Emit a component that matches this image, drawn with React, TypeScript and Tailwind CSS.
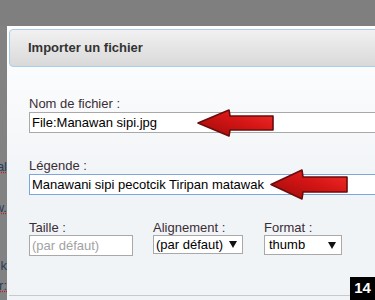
import React from 'react'

function Arrow({ className, w, h }: { className: string; w: number; h: number }) {
  // arrow pointing left; tip at x=1
  const hx = Math.round(w * 0.42)
  const t = Math.round(h * 0.24)
  const b = h - t
  const id = 'g' + w + h
  return (
    <svg
      className={className}
      width={w + 2}
      height={h + 2}
      viewBox={`0 0 ${w + 2} ${h + 2}`}
    >
      <defs>
        <linearGradient id={id} x1="0" y1="1" x2="1" y2="0">
          <stop offset="0" stopColor="#9c0a0a" />
          <stop offset="0.55" stopColor="#d41515" />
          <stop offset="1" stopColor="#f3302a" />
        </linearGradient>
      </defs>
      <path
        d={`M1 ${h / 2 + 1} L${hx} 1 L${hx + 1} ${t + 1} L${w + 1} ${t + 1} L${w + 1} ${b + 1} L${hx + 1} ${b + 1} L${hx} ${h + 1} Z`}
        fill={`url(#${id})`}
        stroke="#6a0c0c"
        strokeWidth="1.6"
        strokeLinejoin="round"
      />
    </svg>
  )
}

function Caret() {
  return (
    <svg width="8" height="7" viewBox="0 0 8 7">
      <path d="M0 0 H8 L4 7 Z" fill="#111" />
    </svg>
  )
}

export default function App() {
  return (
    <div
      className="relative w-[375px] h-[300px] overflow-hidden bg-[#7f7f7f] text-[13px] text-[#333]"
      style={{ fontFamily: '"Liberation Sans", Arial, sans-serif' }}
    >
      <div className="h-[26px]" />
      <div className="flex h-[274px]">
        {/* page behind the overlay */}
        <div className="w-[7px] shrink-0 overflow-hidden bg-[#828282] text-[#2a3d5c] leading-[15px]">
          <div className="flex flex-col items-end">
            <span className="mt-[133px] whitespace-nowrap underline decoration-dotted decoration-[#c21d1d]">
              sal
            </span>
            <span className="mt-[26px] whitespace-nowrap underline decoration-dotted decoration-[#c21d1d]">
              w.
            </span>
            <span className="mt-[43px] whitespace-nowrap">k</span>
            <span className="mt-[5px] whitespace-nowrap underline decoration-dotted decoration-[#c21d1d]">
              r:
            </span>
          </div>
        </div>

        {/* dialog */}
        <div className="w-[420px] shrink-0 bg-white pt-[3px] pl-[2px]">
          <div className="h-[38px] rounded-[4px] border border-[#aacde8] bg-gradient-to-b from-[#f1f1f1] to-[#d9d9d9] pl-[18px] flex items-center">
            <span className="font-bold text-[13px] text-[#333]">Importer un fichier</span>
          </div>
          <div className="-ml-[2px] h-[240px] bg-gradient-to-b from-[#fbfcfd] via-[#f1f4f7] to-[#f1f4f7] pl-[22px] pt-[29px]">
            <div className="leading-[15px] text-[#3a2e35]">Nom de fichier :</div>
            <div className="mt-px h-[21px] w-[400px] border border-[#a9a9a9] bg-white px-[2px] flex items-center text-[13px] text-black">
              File:Manawan sipi.jpg
            </div>

            <div className="mt-[25px] leading-[15px] text-[#3a2e35]">Légende :</div>
            <div className="mt-px h-[21px] w-[400px] border border-[#7fa6dc] bg-white px-[2px] flex items-center text-[13px] text-black">
              Manawani sipi pecotcik Tiripan matawak
            </div>

            <div className="mt-[25px] flex">
              <div className="w-[124px]">
                <div className="leading-[15px] text-[#3a2e35]">Taille :</div>
                <div className="h-[21px] w-[104px] border border-[#a9a9a9] bg-white px-[2px] flex items-center text-[#a2a2a2]">
                  (par défaut)
                </div>
              </div>
              <div className="w-[111px]">
                <div className="leading-[15px] text-[#3a2e35]">Alignement :</div>
                <div className="h-[19px] w-[90px] border border-[#a9a9a9] bg-white pl-[2px] pr-[5px] flex items-center justify-between text-black">
                  <span>(par défaut)</span>
                  <Caret />
                </div>
              </div>
              <div>
                <div className="leading-[15px] text-[#3a2e35]">Format :</div>
                <div className="h-[20px] w-[78px] border border-[#a9a9a9] bg-white pl-[4px] pr-[5px] flex items-center justify-between text-black">
                  <span>thumb</span>
                  <Caret />
                </div>
              </div>
            </div>

            <div className="mt-[39px] -ml-[20px] h-px w-[400px] bg-[#c9c9c9]" />
          </div>
        </div>
      </div>

      <Arrow className="absolute left-[197px] top-[109px]" w={75} h={26} />
      <Arrow className="absolute left-[270px] top-[169px]" w={76} h={29} />

      <div className="absolute right-0 bottom-0 w-[25px] h-[23px] bg-black text-white font-bold text-[15px] flex items-center justify-center">
        14
      </div>
    </div>
  )
}
